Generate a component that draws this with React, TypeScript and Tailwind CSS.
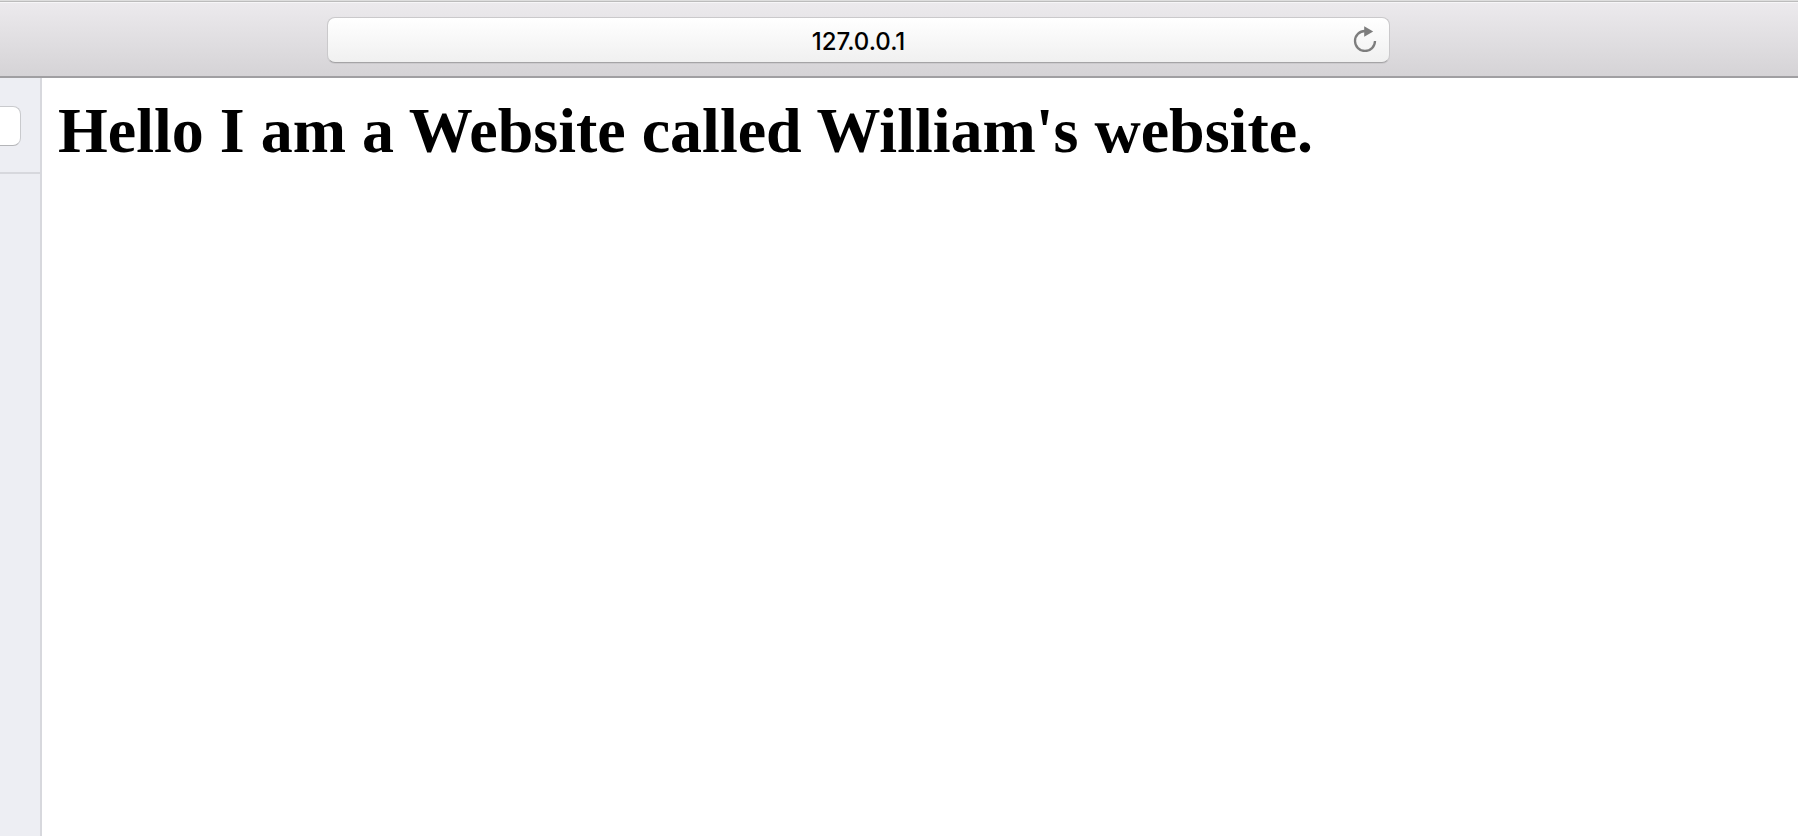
function ReloadIcon() {
  return (
    <svg className="h-7 w-6" viewBox="0 0 24 28" fill="none" aria-hidden="true">
      <path d="M13 7H12A10 10 0 1 0 22 17" stroke="#7d7d7d" strokeWidth="2.3" />
      <path d="M11.2 2.2L20.2 7.6L11.2 12.8Z" fill="#7d7d7d" />
    </svg>
  );
}

function Toolbar() {
  return (
    <header className="flex h-[78px] shrink-0 flex-col border-b-2 border-[#a09fa2] bg-linear-to-b from-[#edebee] to-[#d5d3d6]">
      <div className="h-[2px] shrink-0 border-b border-[#bcbcbc] bg-[#dedede]" />
      <div className="h-px shrink-0 bg-[#f7f6f8]" />
      <div className="flex flex-1 items-start pt-[14px] pr-[408px] pl-[327px]">
        <div className="relative w-full">
          <input
            type="text"
            aria-label="Address"
            defaultValue="127.0.0.1"
            className="block h-[46px] w-full rounded-lg border border-[#cac9cb] border-b-[#a5a4a6] bg-linear-to-b from-white to-[#f0f0f0] px-12 pt-[2px] text-center font-['Inter',sans-serif] text-2xl font-medium text-black shadow-[0_1px_0_rgba(0,0,0,0.06)] outline-none"
          />
          <button
            type="button"
            aria-label="Reload"
            className="absolute top-[7px] right-[13px] flex items-center justify-center"
          >
            <ReloadIcon />
          </button>
        </div>
      </div>
    </header>
  );
}

function Sidebar() {
  return (
    <aside className="w-[42px] shrink-0 overflow-hidden border-r-2 border-[#d7d8dd] bg-[#edeef3]">
      <div className="border-b-2 border-[#d7d8dd] pt-7 pb-[26px]">
        <input
          type="text"
          aria-label="Search sidebar"
          className="block h-10 w-[21px] rounded-r-lg border border-l-0 border-[#c9cacd] border-b-[#b4b5b8] bg-white outline-none"
        />
      </div>
    </aside>
  );
}

export default function App() {
  return (
    <div className="flex min-h-screen flex-col bg-white">
      <Toolbar />
      <div className="flex flex-1">
        <Sidebar />
        <main className="flex-1 px-4 pt-4">
          <h1 className="font-['Liberation_Serif',serif] text-[64px] leading-[74px] font-bold text-black">
            Hello I am a Website called William's website.
          </h1>
        </main>
      </div>
    </div>
  );
}
